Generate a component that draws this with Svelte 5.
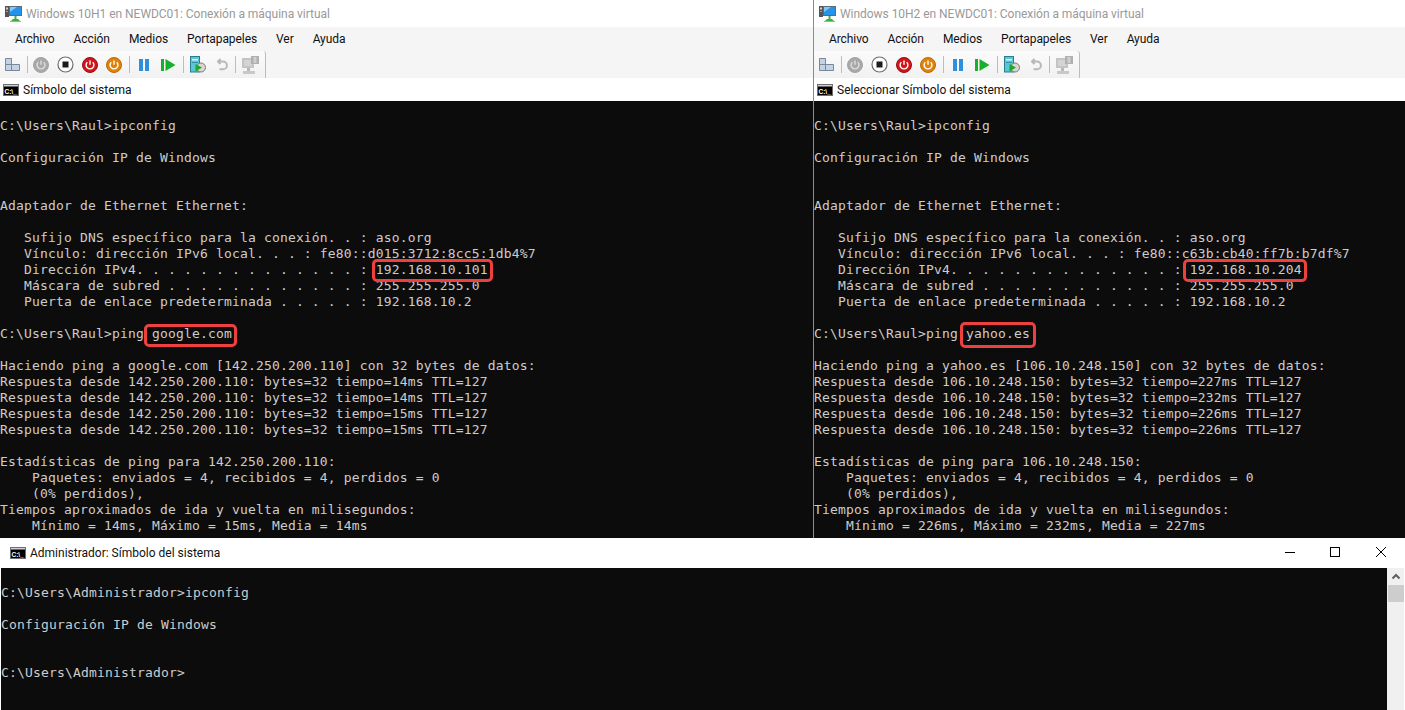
<script>
  const vms = [
    { title: 'Windows 10H1 en NEWDC01: Conexión a máquina virtual', tab: 'Símbolo del sistema', dns: 'fe80::d015:3712:8cc5:1db4%7', ip: '192.168.10.101', host: 'google.com', addr: '142.250.200.110', times: [14, 14, 15, 15], sum: 'Mínimo = 14ms, Máximo = 15ms, Media = 14ms', hostClass: 'h-google', ipClass: 'h-ip' },
    { title: 'Windows 10H2 en NEWDC01: Conexión a máquina virtual', tab: 'Seleccionar Símbolo del sistema', dns: 'fe80::c63b:cb40:ff7b:b7df%7', ip: '192.168.10.204', host: 'yahoo.es', addr: '106.10.248.150', times: [227, 232, 226, 226], sum: 'Mínimo = 226ms, Máximo = 232ms, Media = 227ms', hostClass: 'h-yahoo', ipClass: 'h-ip2' }
  ];
  const menus = ['Archivo', 'Acción', 'Medios', 'Portapapeles', 'Ver', 'Ayuda'];
</script>

{#snippet cmdIcon()}
  <svg class="cmd" width="16" height="12" viewBox="0 0 16 12">
    <rect x="0.5" y="0.5" width="15" height="11" fill="#000" stroke="#6f6f6f"/>
    <rect x="1" y="1" width="14" height="1.500" fill="#d0d0d0"/>
    <text x="1.500" y="9.500" font-size="6.500" font-weight="700" fill="#fff" font-family="Liberation Sans, sans-serif">C:\_</text>
  </svg>
{/snippet}

{#snippet power(bg, ring, glyph)}
  <svg width="16" height="16" viewBox="0 0 16 16">
    <circle cx="8" cy="8" r="7.500" fill={bg} stroke={ring}/>
    <path d="M5.300 5.200a3.900 3.900 0 1 0 5.400 0M8 3.400v4.400" fill="none" stroke={glyph} stroke-width="1.400"/>
  </svg>
{/snippet}

<main class="desk">
  <div class="top">
    {#each vms as vm, i}
      <section class="vm" class:second={i === 1}>
        <header class="title">
          <svg width="17" height="17" viewBox="0 0 17 17">
            <rect x="0" y="1" width="4" height="11" fill="#555"/>
            <rect x="1" y="2.500" width="2" height="2" fill="#d0d0d0"/>
            <rect x="1" y="6" width="2" height="1" fill="#a0a0a0"/>
            <rect x="4.500" y="1.500" width="12" height="9" fill="#2793e6" stroke="#5b6b78"/>
            <path d="M5 2h7L5 7z" fill="#7fc9f5"/>
            <rect x="9.500" y="11" width="2" height="3" fill="#4aa84a"/>
            <path d="M6 16l2-2h5l2 2z" fill="#35b535"/>
            <rect x="5" y="16" width="11" height="1" fill="#79c979"/>
          </svg>
          <span>{vm.title}</span>
        </header>
        <nav class="menu">
          {#each menus as m}<span>{m}</span>{/each}
        </nav>
        <div class="tools">
          <div class="toolbar">
            <svg width="15" height="13" viewBox="0 0 15 13">
              <path d="M.5.5h6v6h8v6H.5z" fill="#c3d3e6" stroke="#7b8796"/>
              <path d="M.5 6.500h6v6" fill="none" stroke="#7b8796"/>
            </svg>
            <i class="sep"></i>
            <div class="group g-power">
              {@render power('#a8a8a8', '#a4a4a4', '#dedede')}
              <svg width="17" height="17" viewBox="0 0 17 17">
                <circle cx="8.500" cy="8.500" r="7.500" fill="#fff" stroke="#6e6e6e" stroke-width="1.200"/>
                <rect x="5.500" y="5.500" width="6" height="6" fill="#1c1c1c"/>
              </svg>
              {@render power('#d4141b', '#8f1212', '#fff')}
              {@render power('#e08108', '#b96a08', '#fff')}
            </div>
            <i class="sep"></i>
            <div class="group g-run">
              <svg width="10" height="12" viewBox="0 0 10 12">
                <rect width="4" height="12" fill="#2f8fdc"/>
                <rect x="6" width="4" height="12" fill="#2f8fdc"/>
              </svg>
              <svg width="15" height="12" viewBox="0 0 15 12">
                <rect width="3" height="12" fill="#17b02d"/>
                <path d="M4.500 0l10 6-10 6z" fill="#17b02d"/>
              </svg>
            </div>
            <i class="sep"></i>
            <div class="group g-snap">
              <svg width="16" height="17" viewBox="0 0 16 17">
                <rect x=".5" y=".5" width="9" height="15.500" fill="#5cc6d6" stroke="#287e8e"/>
                <rect x="2" y="3" width="6" height="1.500" fill="#d6f2f6"/>
                <rect x="2" y="6" width="6" height="1" fill="#2f93a5"/>
                <circle cx="11" cy="11.500" r="4.500" fill="#d8d8d0" stroke="#7a7a70"/>
                <path d="M5.500 8l6.500 3.500-6.500 4z" fill="#19a92c"/>
              </svg>
              <svg width="11" height="13" viewBox="0 0 11 13">
                <path d="M3.500 1L1 3.500 3.500 6M1.500 3.500H6a3.800 3.800 0 0 1 0 7.800H2.500" fill="none" stroke="#b8b8b8" stroke-width="2"/>
              </svg>
            </div>
            <i class="sep"></i>
            <svg class="mon" width="17" height="18" viewBox="0 0 17 18">
              <rect x="0" y="2" width="12" height="10" fill="#c4c4c4"/>
              <rect x="2" y="4" width="8" height="6" fill="#d4d4d4"/>
              <rect x="9" y="0" width="8" height="8" fill="#b0b0b0"/>
              <rect x="11.500" y="1" width="3" height="6" fill="#cfcfcf"/>
              <rect x="5" y="12" width="3" height="3" fill="#b8b8b8"/>
              <rect x="1" y="15" width="12" height="3" fill="#c8c8c8"/>
            </svg>
          </div>
        </div>
        <div class="tab">{@render cmdIcon()}<span>{vm.tab}</span></div>
        <pre class="console">
C:\Users\Raul&gt;ipconfig

Configuración IP de Windows


Adaptador de Ethernet Ethernet:

   Sufijo DNS específico para la conexión. . : aso.org
   Vínculo: dirección IPv6 local. . . : {vm.dns}
   Dirección IPv4. . . . . . . . . . . . . . : <span class="hl {vm.ipClass}">{vm.ip}</span>
   Máscara de subred . . . . . . . . . . . . : 255.255.255.0
   Puerta de enlace predeterminada . . . . . : 192.168.10.2

C:\Users\Raul&gt;ping <span class="hl {vm.hostClass}">{vm.host}</span>

Haciendo ping a {vm.host} [{vm.addr}] con 32 bytes de datos:
{#each vm.times as t}Respuesta desde {vm.addr}: bytes=32 tiempo={t}ms TTL=127
{/each}
Estadísticas de ping para {vm.addr}:
    Paquetes: enviados = 4, recibidos = 4, perdidos = 0
    (0% perdidos),
Tiempos aproximados de ida y vuelta en milisegundos:
    {vm.sum}
</pre>
      </section>
    {/each}
  </div>

  <section class="admin">
    <header class="admin-title">
      {@render cmdIcon()}
      <span class="admin-name">Administrador: Símbolo del sistema</span>
      <div class="controls">
        <svg width="46" height="30" viewBox="0 0 46 30"><path d="M19 14.500h10" stroke="#000"/></svg>
        <svg width="46" height="30" viewBox="0 0 46 30"><rect x="18.500" y="9.500" width="9" height="9" fill="none" stroke="#000"/></svg>
        <svg width="46" height="30" viewBox="0 0 46 30"><path d="M18 9l10 10M28 9L18 19" stroke="#000" fill="none"/></svg>
      </div>
    </header>
    <div class="admin-body">
      <pre class="console admin-console">

C:\Users\Administrador&gt;ipconfig

Configuración IP de Windows


C:\Users\Administrador&gt;
</pre>
      <aside class="scroll">
        <svg width="16" height="17" viewBox="0 0 16 17"><path d="M4.500 10.500L8 7l3.500 3.500" fill="none" stroke="#606060" stroke-width="2"/></svg>
        <div class="thumb"></div>
      </aside>
    </div>
  </section>
</main>

<style>
  :global(body) { margin: 0; background: #fff; }
  .desk { width: 1405px; height: 710px; overflow: hidden; display: flex; flex-direction: column; font-family: Roboto, sans-serif; }
  .top { display: grid; grid-template-columns: 813px 592px; height: 538px; overflow: hidden; }
  .vm { display: flex; flex-direction: column; min-width: 0; height: 538px; overflow: hidden; }
  .second { border-left: 1px solid #8c8c8c; box-sizing: border-box; }
  .title { height: 27px; display: flex; align-items: center; gap: 4px; padding-left: 5px; background: #fff; color: #999; font: 12px Roboto, sans-serif; letter-spacing: -0.04px; flex: none; }
  .menu { height: 24px; background: #f5f5f5; flex: none; display: flex; align-items: center; gap: 19px; padding-left: 15px; font: 12px Roboto, sans-serif; letter-spacing: -0.08px; color: #111; }
  .tools { height: 27px; flex: none; background: #f5f5f5; }
  .toolbar { width: 266px; height: 27px; box-sizing: border-box; background: linear-gradient(#fbfbfb, #f1f1f1); border-right: 1px solid #bdbdbd; border-radius: 0 3px 0 0; display: flex; align-items: center; padding-left: 5px; }
  .sep { width: 1px; height: 17px; background: #bdbdbd; margin: 0 5px 0 7px; }
  .group { display: flex; align-items: center; }
  .g-power { gap: 8px; }
  .g-run { gap: 12px; margin-left: 4px; }
  .g-snap { gap: 11px; margin-left: 1px; }
  .mon { margin-left: 1px; }
  .tab { height: 23px; flex: none; background: #fff; display: flex; align-items: center; gap: 4px; padding-left: 3px; font: 12px Roboto, sans-serif; color: #111; }
  .console { margin: 0; padding-top: 1px; flex: 1; background: #0c0c0c; color: #cccccc; font: 13px/16px "DejaVu Sans Mono", monospace; letter-spacing: 0.17px; white-space: pre; overflow: hidden; }
  .hl { position: relative; }
  .hl::after { content: ""; position: absolute; border: 3px solid #ef4040; border-radius: 5px; box-sizing: border-box; pointer-events: none; }
  .h-ip::after { left: -4px; right: -5px; top: -3px; height: 23px; }
  .h-ip2::after { left: -7px; right: -5px; top: -3px; height: 23px; }
  .h-google::after { left: -8px; right: -5px; top: -2px; height: 23px; }
  .h-yahoo::after { left: -6px; right: -6px; top: -4px; height: 26px; }
  .admin { height: 172px; flex: none; display: flex; flex-direction: column; background: #fff; padding: 0 1px; box-sizing: border-box; }
  .admin-title { height: 30px; flex: none; display: flex; align-items: center; gap: 4px; padding-left: 9px; font: 12px Roboto, sans-serif; color: #111; }
  .admin-name { flex: 1; }
  .controls { display: flex; }
  .admin-body { flex: 1; display: flex; min-height: 0; }
  .admin-console { flex: 1; }
  .scroll { width: 17px; flex: none; box-sizing: border-box; background: #f0f0f0; padding-left: 1px; }
  .scroll svg { display: block; }
  .thumb { height: 17px; background: #cdcdcd; }
</style>
